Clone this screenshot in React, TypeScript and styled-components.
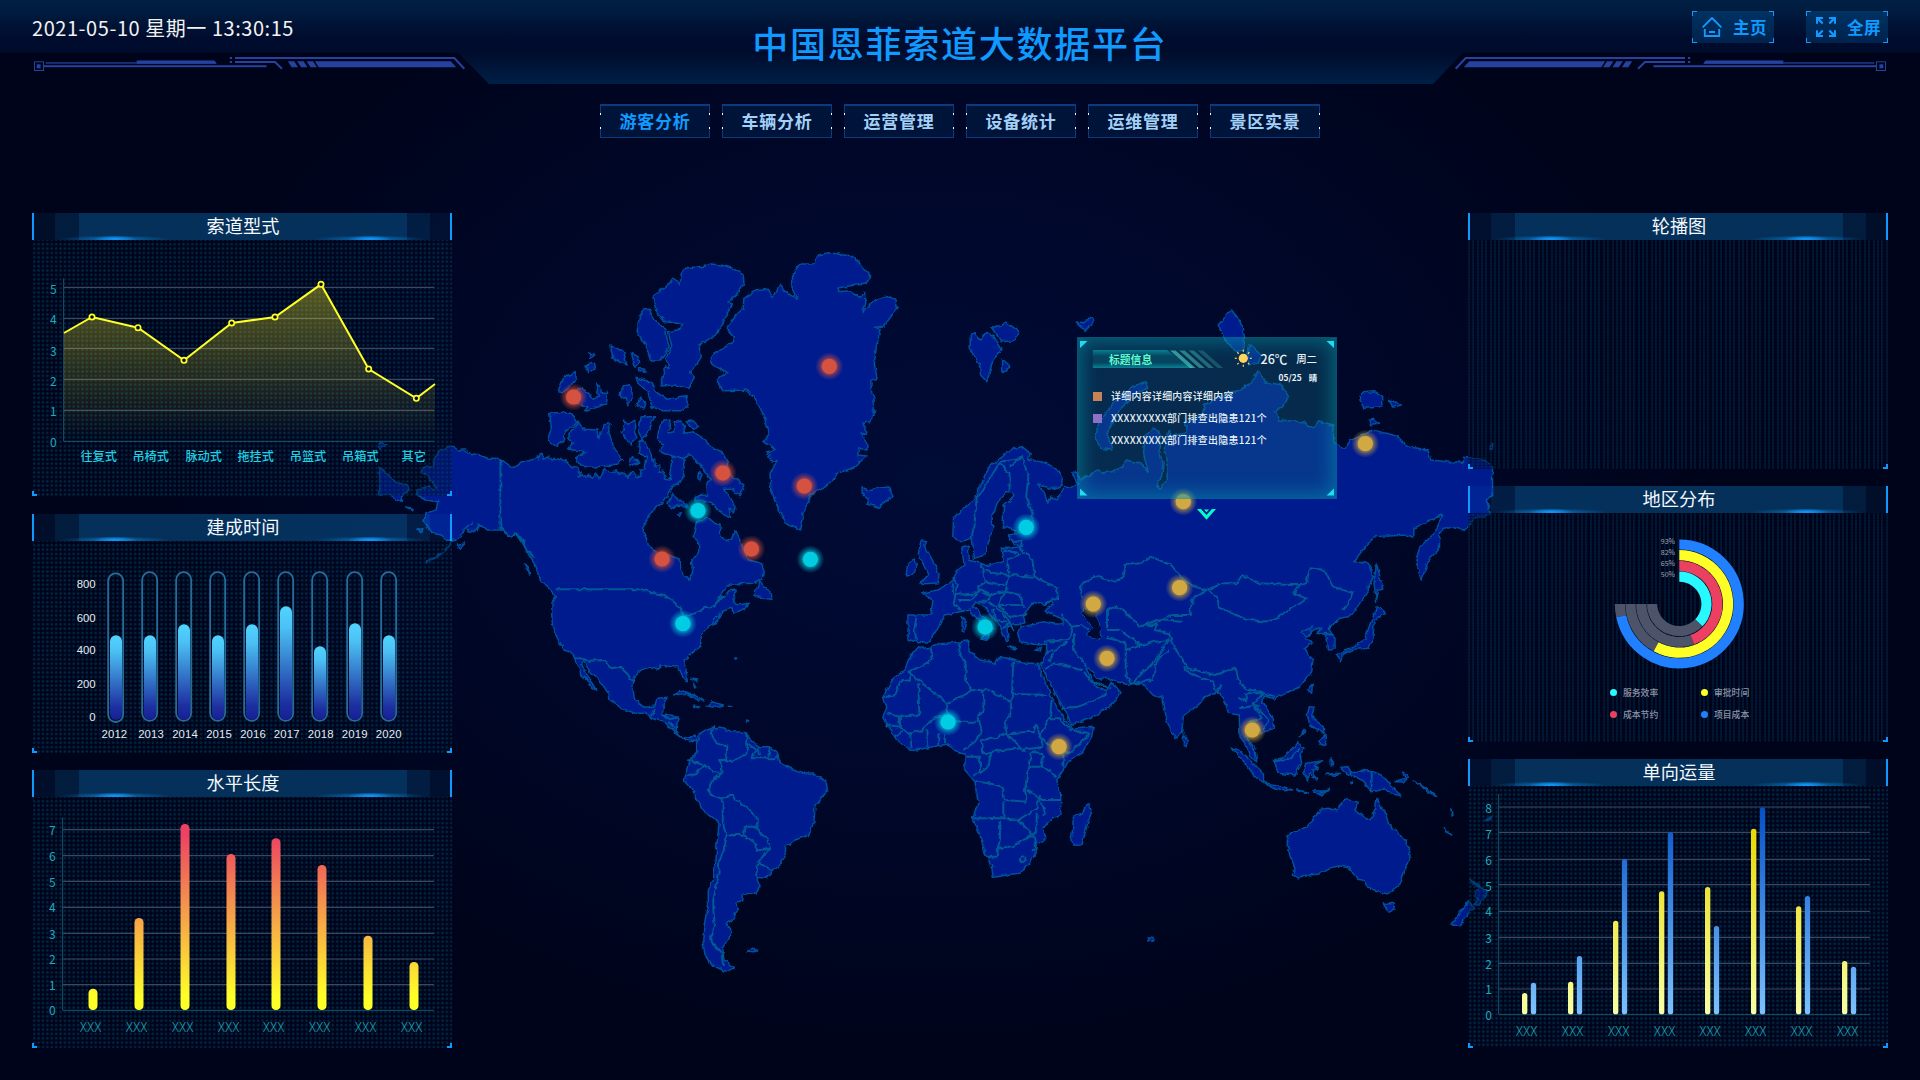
import React from "react";
import styled, { createGlobalStyle } from "styled-components";

const GlobalStyle = createGlobalStyle`
  * { box-sizing: border-box; }
  html, body { margin: 0; background: #00041b; }
  body { overflow: hidden; font-family: "Noto Sans CJK SC", "Noto Sans", sans-serif; }
`;

const BLUE = "#109aff";

const Page = styled.div`
  position: relative;
  width: 1920px;
  height: 1080px;
  overflow: hidden;
  background: radial-gradient(ellipse 760px 560px at 930px 480px, #000b36 0%, #00082e 40%, #000520 85%, #00041b 100%);
`;

/* ---------- header ---------- */

const Header = styled.header`
  position: relative;
  height: 84px;
  display: grid;
  grid-template-columns: 1fr auto 1fr;
  padding: 0 32px;
`;

const HeaderArt = styled.svg`
  position: absolute;
  left: 0;
  top: 0;
  width: 1920px;
  height: 84px;
`;

const Clock = styled.div`
  position: relative;
  height: 57px;
  line-height: 56px;
  font-size: 20px;
  letter-spacing: 0.55px;
  color: #f2f2f2;
  white-space: nowrap;
`;

const Title = styled.h1`
  position: relative;
  margin: 0;
  line-height: 84px;
  font-size: 36px;
  font-weight: 500;
  letter-spacing: 1.75px;
  color: ${BLUE};
`;

const Actions = styled.div`
  position: relative;
  display: flex;
  justify-content: flex-end;
  gap: 32px;
  padding-top: 11px;
`;

const corner = (x: string, y: string, len: number, t: number) =>
  `linear-gradient(${BLUE}, ${BLUE}) ${x} ${y} / ${len}px ${t}px no-repeat, linear-gradient(${BLUE}, ${BLUE}) ${x} ${y} / ${t}px ${len}px no-repeat`;

const ActionButton = styled.button`
  width: 82px;
  height: 32px;
  padding: 0 7px 0 10px;
  display: flex;
  align-items: center;
  justify-content: space-between;
  border: 0;
  font: 700 16.5px "Noto Sans CJK SC", sans-serif;
  letter-spacing: 0.5px;
  color: ${BLUE};
  background: ${corner("left", "top", 5, 1)}, ${corner("right", "top", 5, 1)},
    ${corner("left", "bottom", 5, 1)}, ${corner("right", "bottom", 5, 1)},
    linear-gradient(#003263, #00224d);
`;

const Ornament = () => (
  <g fill="#25429f" stroke="none">
    <rect x="34.5" y="61.8" width="9" height="8.7" fill="none" stroke="#25429f" strokeWidth="1" />
    <rect x="36.7" y="64.3" width="3.9" height="4" />
    <rect x="45.7" y="62.2" width="170" height="1.5" opacity=".85" />
    <path d="M136.7 60.6H214.5L216.8 63.7H136.7Z" />
    <rect x="43.7" y="65.2" width="222.8" height="2" />
    <rect x="229.8" y="57" width="2.2" height="2" />
    <rect x="229.8" y="61" width="2.2" height="2" />
    <path d="M235 58H454.3L464.3 68.7M235 62H275L282 68.7" fill="none" stroke="#25429f" strokeWidth="2" />
    {[0, 1, 2].map((i) => (
      <path key={i} d={`M${287.8 + i * 9.4} 61.3h6.4l3.9 6h-6.4z`} />
    ))}
    <path d="M314.8 61.3H450.8L456.2 67.3H318.8Z" />
  </g>
);

const HomeIcon = () => (
  <svg width="20" height="20" viewBox="0 0 20 20" fill="none" stroke={BLUE} strokeWidth="1.9">
    <path d="M0.6 10.4L10 1L19.4 10.4M2.8 12V19H17.2V12M7 15H13" />
  </svg>
);

const ExpandIcon = () => (
  <svg width="20" height="20" viewBox="0 0 20 20" fill={BLUE}>
    {["", "translate(20 0) scale(-1 1)", "translate(0 20) scale(1 -1)", "translate(20 20) scale(-1 -1)"].map((t) => (
      <path key={t} transform={t} d="M0 0H7V2H4L7.4 5.7L6 7.2L2 3.4V6.8H0Z" />
    ))}
  </svg>
);

/* ---------- navigation ---------- */

const Nav = styled.nav`
  position: relative;
  display: flex;
  justify-content: center;
  gap: 12px;
  padding-top: 20px;
`;

const NavItem = styled.a<{ $active?: boolean }>`
  width: 110px;
  height: 34px;
  line-height: 34px;
  text-align: center;
  font-size: 17px;
  font-weight: 700;
  letter-spacing: 0.7px;
  color: ${(p) => (p.$active ? BLUE : "#a3d0f7")};
  background:
    linear-gradient(#0b3b7d 0 9px, #fff 9px 11px, transparent 11px 23px, #fff 23px 25px, #0b3b7d 25px) left / 1px 100% no-repeat,
    linear-gradient(#0b3b7d 0 9px, #fff 9px 11px, transparent 11px 23px, #fff 23px 25px, #0b3b7d 25px) right / 1px 100% no-repeat,
    linear-gradient(#0b3b7d 0 1.5px, #00143a 1.5px 32.5px, #0b3b7d 32.5px);
`;

/* ---------- world map ---------- */

type Sheet = "A" | "B" | "C" | "D";
type Shape = string;

const SHEETS: Record<Sheet, [number, number, number, number]> = {
  A: [370, 240, 2.8, 3],
  B: [850, 300, 2.4123, 3],
  C: [540, 600, 3, 3],
  D: [1000, 590, 3, 3],
};

/* A shape is a run of "x,y" pairs; a sheet letter switches the survey sheet the pairs are measured on. */
const trace = (shape: Shape) => {
  let sheet: Sheet = "A";
  const out: string[] = [];
  for (const token of shape.trim().split(/\s+/)) {
    if (token in SHEETS) {
      sheet = token as Sheet;
    } else {
      const [ox, oy, sx, sy] = SHEETS[sheet];
      const [x, y] = token.split(",").map(Number);
      out.push(`${(ox + x / sx).toFixed(1)},${(oy + y / sy).toFixed(1)}`);
    }
  }
  return out.join(" ");
};

const LAND: Shape[] = [
  // North America
  `A 229,616 245,630 268,630 280,640 305,645 330,655 350,655 365,660 385,672 402,683 425,665 445,662 462,655 468,648 473,657 478,640 488,655 500,648 508,663 512,655 530,658 550,664 565,680 582,683 592,705 585,710 612,706 625,712 635,702 640,718 652,700 655,685 670,697 690,692 697,703 712,700 722,712 735,695 745,710 760,705 752,690 770,690 775,650 752,640 755,605 765,598 778,620 787,640 790,665 797,660 800,680 812,675 808,697 820,690 828,718 838,720 840,700 845,660 850,650 875,655 880,665 875,690 880,710 862,735 843,740 835,760 828,775 820,790 800,800 780,830 768,850 764,880 775,895 780,920 800,935 835,945 868,958 870,985 880,1005 893,1018 902,1000 905,985 900,965 920,935 920,905 905,890 912,870 917,845 945,830 965,850 980,855 982,885 998,905 1010,900 1024,872 1035,895 1045,925 1060,960 1095,970 1102,990 1098,1015 1070,1030 1010,1032 990,1050 975,1075 990,1070 1005,1052 1025,1050 1022,1065 1015,1085 1030,1095 1062,1090 1050,1105 1020,1118 1010,1105 985,1115 975,1145 950,1160
   C 537,40 537,62 510,75 490,95 480,120 484,138 465,152 432,180 437,205 442,245 432,240 422,215 415,200 395,200 360,195 358,208 330,200 300,212 283,235 278,265 285,300 312,322 345,318 352,295 382,292 370,320 366,345 395,346 415,350 410,375 408,395 425,412 445,415 465,405 470,425 460,420 452,425 435,420 415,405 395,385 375,368 350,360 330,352 315,340 285,340 245,325 210,300 208,285 185,250 150,215 132,185 125,190 135,212 150,240 170,272 155,262 140,235 122,225 118,205 105,175 100,165 75,150 55,120 38,85 35,40
   A 510,1090 522,1070 500,1045 475,1020 465,980 445,945 425,905 412,885 395,890 365,870 330,870 305,855 295,872 280,880 270,865 285,850 265,865 255,890 230,905 210,930 190,950 158,967 205,935 225,910 232,897 215,898 200,885 175,880 165,865 152,845 155,820 185,810 190,785 155,780 133,765 135,750 165,738 180,750 188,745 165,715 143,692 150,682 178,680 180,655 200,630`,
  // Greenland
  `A 1115,148 1125,175 1148,132 1165,155 1196,178 1182,145 1183,110 1195,85 1208,72 1243,72 1255,45 1285,38 1350,48 1375,75 1402,108 1388,132 1340,138 1310,145 1312,155 1345,152 1370,172 1388,158 1388,190 1380,215 1415,180 1445,167 1472,178 1477,205 1455,235 1440,258 1415,262 1428,268 1418,320 1412,370 1420,415 1402,425 1405,460 1412,480 1405,510 1415,517 1400,545 1380,550 1390,583 1372,575 1390,605 1392,630 1370,625 1365,645 1392,648 1350,685 1308,700 1295,725 1275,740 1245,755 1232,765 1225,790 1212,820 1212,840 1205,870 1180,855 1165,852 1140,800 1122,745 1120,700 1140,665 1120,660 1113,635 1135,628 1103,605 1118,580 1105,535 1095,510 1080,478 1052,450 990,452 970,420 1000,400 970,380 952,365 960,345 1018,305 1020,290 998,265 1030,220 1045,205 1047,175 1080,152`,
  // Canadian Arctic
  `A 868,135 872,100 890,82 925,82 955,72 985,76 1015,85 1045,105 1047,130 1025,165 1000,188 1015,192 1000,220 980,265 970,285 940,305 920,315 928,350 910,380 895,395 908,412 890,445 855,435 812,438 825,400 822,380 838,385 828,355 845,320 835,275 870,268 875,252 825,245 800,210 793,170 815,148 835,135 848,115 860,122`,
  `A 765,210 782,208 795,240 828,268 832,300 838,320 815,360 785,360 772,318 748,275 755,230`,
  `A 745,412 790,430 800,455 830,478 885,470 890,500 870,512 820,512 790,500 778,455 750,430`,
  `A 672,315 710,335 720,378 680,355`,
  `A 732,338 750,350 755,370 742,382`,
  `A 712,435 732,438 735,475 722,497 715,475 698,465 700,450`,
  `A 755,472 772,490 768,507 748,497`,
  `A 575,395 578,420 560,440 540,458 525,455 545,410`,
  `A 632,430 645,440 648,460 665,460 662,490 630,505 600,515 610,500 575,490 560,460 590,445 612,460 625,478 640,468`,
  `A 615,340 632,345 615,355`,
  `A 605,375 630,370 630,385 612,398`,
  `A 752,385 770,388 770,394 752,392`,
  `A 503,520 540,517 570,528 582,548 550,572 540,600 525,622 497,600 508,565`,
  `A 585,550 600,568 635,570 640,595 655,555 670,545 675,552 668,570 675,600 690,635 710,660 680,675 620,682 590,678 575,655 605,635 555,628 570,610 553,598 565,570`,
  `A 710,540 725,550 742,538 740,575 748,595 730,612 700,575 712,570`,
  `A 760,530 797,530 780,570 762,598 752,575 756,550`,
  `A 735,650 752,668 728,678 724,665`,
  `A 808,570 815,545 840,540 835,580 850,575 855,545 870,540 885,565 880,580 905,575 940,600 950,620 985,635 1000,665 1005,700 1030,720 1047,735 1035,768 1010,745 990,745 1010,775 1022,800 1018,818 1005,805 1010,832 980,815 955,790 910,780 910,768 945,765 943,730 955,720 935,690 910,655 895,645 870,658 812,632 820,615 805,600`,
  `A 885,545 905,542 920,560 905,568`,
  `A 845,760 890,800 860,795 840,808 835,790`,
  `A 920,695 932,705 925,722 918,715`,
  `A 1090,1018 1098,1035 1118,1050 1125,1078 1100,1075 1075,1068 1085,1040`,
  `A 858,822 872,818 865,830`,
  `A 97,800 110,803 120,812`,
  `A 432,975 440,980 447,1002`,
  `A 245,915 265,912 250,928`,
  `A 134,868 148,866 144,876`,
  // Eastern tip of Chukotka wrapping round the left edge
  `A 27,682 50,705 75,728 105,735 110,752 90,765 85,787 55,765 27,765`,
  `A 25,605 47,615 28,628`,
  // Iceland
  `A 1378,740 1395,755 1420,745 1455,740 1462,770 1425,802 1390,792 1395,775 1378,760`,
  // Caribbean and Atlantic islands
  `C 403,285 415,275 432,273 460,285 495,300 475,300 440,280`,
  `C 498,318 515,305 550,315 528,322`,
  `C 460,319 480,321 478,323`,
  `C 565,319 577,320 575,322`,
  `C 455,235 472,236 470,243`,
  `C 461,252 467,262 464,264`,
  `C 584,174 590,174 587,178`,
  `C 620,360 626,362 622,366`,
  `C 620,1056 635,1048 650,1050 640,1058`,
  // South America
  `C 470,425 480,400 500,388 520,380 528,388 540,383 575,395 600,396 618,398 635,425 660,440 690,440 712,460 722,490 740,500 770,512 800,522 820,522 858,545 863,570 845,595 825,620 822,665 812,690 800,708 765,720 737,740 735,770 715,797 700,810 680,835 648,832 660,860 648,880 610,882 608,905 585,910 595,925 578,958 562,972 576,995 560,1025 548,1045 552,1080 580,1102 578,1108 555,1113 520,1098 495,1065 488,1020 492,980 498,945 505,925 505,870 520,840 528,780 530,740 538,665 515,650 490,633 470,595 455,565 433,540 445,490 470,455`,
  // Africa
  `C 1135,140 1150,145 1170,142 1195,132 1285,123 1288,155 1320,180 1345,185 1365,193 1375,175 1390,172 1450,190 1492,190 1505,225
   D 130,258 150,310 175,360 205,400 215,418 280,412 275,440 245,490 205,515 190,540 170,570 182,615 182,670 150,690 130,715 137,745 112,765 108,790 90,815 60,850 30,853 5,858
   C 1360,832 1355,800 1335,760 1320,705 1298,655 1315,605 1308,570 1305,545 1275,510 1275,460 1240,450 1225,432 1180,440 1115,452 1070,420 1045,380 1028,355 1040,320 1030,290 1060,235 1095,210 1105,180`,
  `D 265,638 273,660 260,710 245,765 225,766 213,755 218,715 220,680 245,670`,
  // Eurasia
  `B 390,448 415,440 435,460 430,478 475,490 500,510 512,535 510,555 490,567 455,555 470,580 475,610 485,592 500,600 508,575 520,560 530,565 548,550 535,515 550,520 555,540 600,510 610,518 630,515 660,500 665,480 700,490 720,515 708,460 712,410 735,385 750,400 745,450 755,490 752,530 740,560 750,565 765,535 765,500 758,440 770,390 775,408 810,400 810,365 850,345 855,315 890,290 940,270 965,250 985,212 1000,245 1040,255 1058,290 1045,320 1025,335 1035,360 1090,365 1120,385 1130,362 1165,375 1170,430 1190,445 1210,420 1240,405 1260,390 1320,408 1345,440 1395,450 1400,480 1440,485 1480,487 1480,472 1530,480 1550,500 1550,590 1535,600 1545,640 1510,655 1480,690 1445,680 1422,695 1422,745 1400,770 1378,840 1365,780 1375,740 1410,700 1430,645 1400,660 1360,685 1360,712 1340,705 1300,708 1265,710 1240,745 1215,785 1250,790 1262,830 1250,860
   D 1105,5 1075,50 1045,80 1020,85 985,115 1005,145 1005,178 985,180 982,145 970,132 950,130 965,112 940,120 920,140 900,130 938,108 925,135 915,148 940,155 915,175 938,215 935,245 900,290 830,320 828,328 790,318 785,335 820,385 820,412 785,435 775,415 755,440 735,440 765,480 770,515 750,500 735,460 720,440 718,375 685,370 678,345 660,310 650,308 615,320 600,340 550,380 545,425 527,445 510,415 495,380 485,320 465,322 445,300 425,280 380,283 340,272 320,262 305,270 290,262 270,235 258,235 285,285 300,295 318,305 332,275 360,308 340,340 290,375 213,405 205,380 155,290 135,250 118,220 132,215 140,180 140,162 110,165 80,158 60,155 53,130 60,112 80,108 130,95 160,102 188,102 190,88 160,75 135,60 158,42 155,35 130,45 100,37 70,75 75,98 50,105 40,100 32,108 20,110 25,152
   B 378,1025 360,975 340,945 320,915 300,905 297,920 330,960 345,985 330,1018 315,1015 328,1005 315,970 290,930 265,935 230,945 205,1000 190,1025 165,1028 140,1018 140,945 195,945 200,900 175,880 210,870 245,845 260,810 275,795 270,745 285,738 288,780 315,790 330,797 370,785 365,745 385,745 410,740 385,720 385,705 430,695 400,692 370,680 370,620 395,590 393,575 375,575 355,610 340,660 345,680 325,765 300,775 295,715 265,725 248,710 250,650 300,600 325,530 330,510 360,475`,
  `B 172,720 185,722 180,740 190,760 215,820 213,848 170,852 188,825 180,800 165,760`,
  `B 155,777 160,790 155,820 135,828 140,790`,
  `B 270,950 278,958 277,998 271,995`,
  `B 383,1042 402,1046 398,1050`,
  `B 448,1050 462,1042 458,1052`,
  // Svalbard, Franz Josef, Novaya Zemlya, Severnaya Zemlya
  `B 290,105 300,98 315,120 328,97 345,110 365,150 345,180 330,245 315,225 312,190 290,150`,
  `B 340,80 358,82 375,65 408,95 395,122 365,125`,
  `B 368,178 388,200 368,215`,
  `B 545,65 565,68 580,50 590,60 568,92 560,82`,
  `B 920,30 940,60 952,110 950,150 930,155 900,110 888,75`,
  `B 965,135 992,165 985,190 962,195 960,160`,
  `B 715,243 718,265 690,280 650,330 620,400 632,450 605,445 592,415 600,370 635,310 680,260`,
  `B 1235,278 1265,275 1285,292 1285,320 1240,325 1230,300`,
  `B 1300,298 1330,315 1310,322`,
  `B 1252,360 1265,358 1278,368 1255,374`,
  `B 1550,430 1550,446 1541,444`,
  // Sakhalin and Japan
  `B 1270,790 1278,830 1285,865 1272,868 1270,905 1264,850`,
  `B 1270,918 1292,940 1270,957 1264,965 1262,1010 1252,1045 1215,1048 1190,1062 1183,1085 1175,1065 1215,1040 1242,1018 1258,960 1266,940`,
  // South-east Asia and Oceania
  `D 693,472 715,480 760,520 790,550 792,578 765,560 740,525 715,495`,
  `D 785,577 830,585 878,600 830,598`,
  `D 820,510 845,505 880,475 893,458 912,475 900,495 905,520 885,555 835,550`,
  `D 918,520 968,512 945,525 955,538 935,540 950,570 930,550 922,572 911,545`,
  `D 1022,532 1045,530 1052,550 1080,540 1120,545 1150,558 1175,590 1205,618 1175,612 1155,598 1115,605 1085,570 1040,550`,
  `D 928,350 942,352 935,380 970,410 972,430 930,405 922,375`,
  `D 955,450 975,435 978,468 962,462`,
  `D 912,418 918,422 898,440`,
  `D 937,283 935,310 922,297`,
  `D 993,503 1000,515 994,528`,
  `D 890,600 925,606 920,612`,
  `D 935,602 975,603 955,612`,
  `D 988,598 965,615 953,613`,
  `D 977,553 1018,550 1010,556`,
  `D 550,432 565,450 558,467 550,460`,
  `D 1208,546 1227,560 1212,576 1185,575 1215,565`,
  `D 1240,573 1290,602 1312,622 1285,605`,
  `D 1352,660 1360,675 1358,678`,
  `D 1330,713 1355,735 1350,732`,
  `D 1478,675 1468,690 1455,692`,
  `D 1052,577 1058,577 1055,584`,
  `D 862,735 890,722 920,712 945,680 965,658 985,655 1010,663 1035,628 1075,637 1065,662 1110,692 1120,680 1128,625 1140,650 1155,665 1165,700 1200,735 1228,770 1230,805 1215,840 1200,885 1165,912 1110,900 1088,870 1070,868 1050,835 1020,828 985,835 955,853 920,855 895,867 877,855 885,835 870,795 862,770`,
  `D 1150,938 1165,942 1183,940 1182,955 1168,970`,
  `D 1410,865 1435,888 1462,905 1438,945 1425,945 1435,925 1425,915 1435,895`,
  `D 1408,935 1420,950 1395,985 1380,1010 1353,1003 1375,975`,
  `D 445,1043 460,1046 458,1054 447,1053`,
];

const BORDERS: Shape[] = [
  `A 365,660 365,865 395,890 412,880 430,905 445,935 460,955`,
  `A 520,1048 760,1048 790,1058 825,1065 850,1085 870,1105 875,1130 910,1120 935,1105 965,1100 975,1080 990,1070`,
  `C 105,172 150,182 195,180 215,205 240,200 260,220 275,240 285,243`,
  `C 345,325 335,350`, `C 370,345 390,358 412,352`, `C 385,365 405,385`,
  `C 520,380 512,400 530,430 562,440 558,480 580,485 620,460 622,430 618,398`,
  `C 558,480 540,480 545,520 515,545 503,570 515,585 545,595 578,585 585,600 625,625 650,650 650,680 618,680 605,705 575,705 560,710 548,665 548,595`,
  `C 608,705 650,735 650,752 690,745 680,715 660,700 650,680`,
  `C 690,745 655,785 648,830`, `C 655,785 697,812`,
  `C 560,710 550,755 538,780 535,830 520,900 520,930 525,980 510,1020 545,1060 550,1100`,
  `C 445,480 490,495 520,515 545,520`, `C 490,495 470,522 440,530`,
  `C 622,430 650,450 632,475 700,475 715,470`, `C 655,440 660,465`, `C 690,440 685,470`,
  `C 1172,145 1178,178 1140,200 1105,215 1220,310 1300,270 1275,240 1278,195 1258,160 1262,125`,
  `C 1300,270 1330,275 1340,268 1415,305 1420,185`, `C 1420,282 1520,285`,
  `C 1415,305 1408,345 1395,370 1400,400`, `C 1330,275 1330,330 1315,350 1325,395`,
  `C 1220,310 1225,345 1180,355 1145,390 1110,400`, `C 1135,250 1138,345 1080,350 1040,340`,
  `C 1030,290 1065,290 1080,245 1110,240 1110,215`, `C 1225,345 1240,365 1315,365`,
  `C 1215,400 1215,430`, `C 1195,400 1195,435`, `C 1162,390 1165,440`, `C 1110,400 1115,445`,
  `C 1080,350 1080,385 1110,400`, `C 1040,375 1080,380`, `C 1065,410 1090,395`,
  `C 1325,395 1305,425 1270,450`, `C 1325,420 1330,460 1355,455 1385,450 1445,445 1400,400 1365,415 1325,420`,
  `C 1400,400 1480,395 1490,375 1510,440 1445,450`, `C 1355,455 1345,500 1320,520 1300,525`,
  `C 1280,470 1320,470 1320,520`, `C 1305,545 1350,550 1385,560 1395,600 1460,605 1455,570 1465,500 1475,455`,
  `C 1465,500 1510,500 1550,530`, `C 1460,570 1510,600 1560,600`, `C 1390,605 1390,655 1300,655`,
  `C 1390,655 1435,660 1490,625 1500,585`, `C 1380,665 1380,715 1370,770 1340,770`,
  `C 1375,745 1420,738 1480,705 1435,660`, `C 1480,705 1490,745 1478,752`, `C 1490,640 1490,690 1480,705`,
  `C 1500,590 1515,640 1505,645`, `C 1438,778 1450,770 1458,780 1445,790 1438,778`, `C 1475,455 1510,460 1505,500`,
  `D 155,330 150,380 118,440 155,470 205,490 230,470 270,430 210,420 180,385 150,385`, `D 190,490 190,530`,
  `B 410,475 380,480 360,490 340,530 305,600 300,680 290,715`, `B 360,490 385,520 385,575`,
  `B 385,500 415,470 430,530 425,590 440,640 440,680`,
  `B 560,890 555,860 590,828 640,845 660,830 665,795 700,790 725,770 775,795 800,835 830,860 860,870 900,850 935,850 945,825 990,850 1060,855 1085,855 1070,880 1100,895 1060,930 1015,965 960,960 930,945 890,920 885,890 860,870`,
  `B 1085,855 1100,850 1110,805 1145,810 1165,860 1215,880 1190,930`,
  `B 860,870 825,900 820,945 775,945 740,970 700,980 660,930 640,920 620,930 620,985`,
  `B 740,970 735,990 770,1000 775,1025 790,1060 815,1105 880,1125 930,1105 940,1150 955,1165 1000,1180 1025,1190`,
  `B 620,1010 665,1030 665,1130 680,1150 730,1090 770,1020`, `B 665,1050 735,1025 770,1020`, `B 620,990 650,990 700,1035`,
  `B 470,1025 530,1020 535,980 510,945`, `B 535,980 560,975 575,990`, `B 540,1000 540,1050 570,1100`,
  `B 480,1085 500,1045 525,1025`, `B 470,1105 490,1090 560,1110`, `B 470,1060 490,1050`,
  `B 510,1225 550,1220 585,1205 620,1180`, `B 565,1115 580,1145 630,1165`,
  `B 680,1150 730,1140 740,1080 770,1050`, `B 805,1100 820,1120 875,1145 885,1180 895,1150`, `B 700,980 740,960 800,965`,
  `D 715,320 740,335 735,310 790,310 760,340 805,390 790,420`, `D 718,355 780,345`, `D 765,350 785,385 745,395`,
  `D 1115,545 1115,605`, `D 820,515 870,505 900,475`, `D 985,120 1010,90`, `D 970,130 1000,135`,
  `B 385,720 415,725 410,745 440,780 445,830 385,825 380,780 415,760`, `B 370,750 405,758`,
  `B 445,830 500,865 500,895 470,910`, `B 385,825 375,875 410,885 420,920`,
  `B 385,825 350,820 320,810 315,790`, `B 320,815 328,845 310,860 310,880 250,885 245,850`,
  `B 245,835 260,850 255,885 250,910 265,930`, `B 310,880 290,900 260,900`,
  `B 328,845 375,855`, `B 310,870 340,885 375,875 358,915 385,950 425,945`, `B 340,885 330,905 310,905`,
  `B 335,905 370,940 385,965`, `B 345,930 350,960 380,965`, `B 358,915 420,915`,
  `B 160,950 155,990 160,1020`, `B 362,985 385,970 395,990`,
];

const CASPIAN = `D 248,55 275,62 290,70 292,92 298,100 302,115 306,145 290,153 262,135 275,115 262,95 245,70`;

const HUES = {
  red: "rgba(218,82,62,.92)",
  cyan: "rgba(0,208,228,.95)",
  gold: "rgba(212,170,64,.94)",
};

const MARKERS: [keyof typeof HUES, Shape][] = [
  ["red", "A 570,471"], ["red", "A 988,699"], ["red", "A 818,957"], ["red", "A 1068,927"],
  ["red", "A 1216,738"], ["red", "A 1286,379"],
  ["cyan", "A 918,812"], ["cyan", "A 1233,958"], ["cyan", "A 876,1151"],
  ["cyan", "B 425,682"], ["cyan", "B 326,981"], ["cyan", "C 1224,366"],
  ["gold", "B 804,605"], ["gold", "B 1243,431"], ["gold", "B 795,863"], ["gold", "B 587,912"],
  ["gold", "B 620,1075"], ["gold", "D 177,470"], ["gold", "D 757,420"],
];

const MapLayer = styled.svg`
  position: absolute;
  inset: 0;
`;

const WorldMap = () => (
  <MapLayer width="1920" height="1080" viewBox="0 0 1920 1080">
    <defs>
      <filter id="coast" filterUnits="userSpaceOnUse" x="370" y="230" width="1140" height="760" colorInterpolationFilters="sRGB">
        <feTurbulence type="fractalNoise" baseFrequency="0.16" numOctaves="2" seed="4" result="noise" />
        <feDisplacementMap in="SourceGraphic" in2="noise" scale="4.5" xChannelSelector="R" yChannelSelector="G" />
      </filter>
      {Object.entries(HUES).map(([name, hue]) => (
        <radialGradient id={`glow-${name}`} key={name}>
          <stop offset="0.5" stopColor={hue} stopOpacity=".75" />
          <stop offset="0.72" stopColor={hue} stopOpacity=".36" />
          <stop offset="1" stopColor={hue} stopOpacity="0" />
        </radialGradient>
      ))}
    </defs>
    <g filter="url(#coast)">
      <g fill="#001b8e" stroke="#00509c" strokeWidth="1.5" strokeLinejoin="round">
        {LAND.map((s) => (
          <polygon key={s} points={trace(s)} />
        ))}
      </g>
      <g fill="none" stroke="#005a94" strokeWidth="1.9" strokeLinejoin="round">
        {BORDERS.map((s) => (
          <polyline key={s} points={trace(s)} />
        ))}
      </g>
      <polygon points={trace(CASPIAN)} fill="#000a34" stroke="#00509f" strokeWidth="1" />
    </g>
    {MARKERS.map(([hue, at]) => {
      const [x, y] = trace(at).split(",");
      return (
        <g key={at}>
          <circle cx={x} cy={y} r="14" fill={`url(#glow-${hue})`} />
          <circle cx={x} cy={y} r="7.6" fill={HUES[hue]} />
        </g>
      );
    })}
  </MapLayer>
);

/* ---------- map tooltip ---------- */

const Tooltip = styled.section`
  position: absolute;
  left: 1077px;
  top: 337px;
  width: 260px;
  height: 162px;
  padding: 12px 19px 0 15px;
  color: #e6f2f7;
  border: 1px solid rgba(0, 160, 180, 0.35);
  background: rgba(18, 110, 140, 0.34);
  box-shadow: inset 0 0 20px 3px rgba(0, 190, 200, 0.42);
`;

const TooltipArt = styled.svg`
  position: absolute;
  left: -1px;
  top: -1px;
`;

const TooltipTop = styled.div`
  position: relative;
  display: flex;
  justify-content: space-between;
  height: 18px;
  line-height: 17px;
`;

const TagTitle = styled.h3`
  margin: 0 0 0 16px;
  font-size: 10.8px;
  line-height: 18px;
  font-weight: 700;
  color: #5dfbd0;
`;

const Weather = styled.div`
  display: flex;
  gap: 9px;
  font-size: 10.4px;
  font-weight: 500;
  b { font-size: 12.6px; font-weight: 500; letter-spacing: -0.1px; }
`;

const DateLine = styled.div`
  position: relative;
  display: flex;
  justify-content: flex-end;
  gap: 7px;
  margin-top: 1px;
  line-height: 17px;
  font-size: 8.4px;
  font-weight: 700;
`;

const Details = styled.ul`
  position: relative;
  list-style: none;
  margin: -1px 0 0;
  padding: 0;
`;

const Detail = styled.li<{ $bullet: string }>`
  display: flex;
  align-items: center;
  gap: 9px;
  height: 22px;
  font-size: 9.9px;
  letter-spacing: 0.35px;
  font-weight: 500;
  white-space: nowrap;
  &::before {
    content: "";
    width: 9px;
    height: 9px;
    background: ${(p) => p.$bullet};
  }
`;

const Pointer = styled.svg`
  position: absolute;
  left: 1197px;
  top: 509px;
`;

const MapTooltip = () => (
  <>
    <Tooltip>
      <TooltipArt width="260" height="162" viewBox="0 0 260 162">
        <defs>
          <linearGradient id="tag" x1="0" x2="0" y1="0" y2="1">
            <stop offset="0" stopColor="#067f93" />
            <stop offset=".35" stopColor="#06455f" />
            <stop offset=".7" stopColor="#06455f" />
            <stop offset="1" stopColor="#0a8296" />
          </linearGradient>
        </defs>
        <path d="M3 4h7.5L3 11zM257 4h-7.5L257 11zM3 158.500h7.500L3 151.500zM257 158.500h-7.500L257 151.500z" fill="#1fdcf5" />
        <path d="M15.8 13H90L116 31H15.800Z" fill="url(#tag)" />
        {[0.65, 0.5, 0.38, 0.25].map((o, i) => (
          <path key={o} d={`M${93 + i * 9.2} 13.500h5.500l20 17.500h-5.500z`} fill="#4fd0c0" opacity={o} />
        ))}
        <circle cx="166.300" cy="21.300" r="4.600" fill="#ffd45f" />
        {Array.from({ length: 8 }, (_, i) => (
          <path key={i} d="M166.300 12.800v2" stroke="#ffd45f" strokeWidth="1.200" transform={`rotate(${i * 45} 166.3 21.3)`} />
        ))}
      </TooltipArt>
      <TooltipTop>
        <TagTitle>标题信息</TagTitle>
        <Weather>
          <b>26℃</b>
          <span>周二</span>
        </Weather>
      </TooltipTop>
      <DateLine>
        <span>05/25</span>
        <span>晴</span>
      </DateLine>
      <Details>
        <Detail $bullet="#c98253">详细内容详细内容详细内容</Detail>
        <Detail $bullet="#8f70c4">XXXXXXXXX部门排查出隐患121个</Detail>
        <Detail $bullet="transparent">XXXXXXXXX部门排查出隐患121个</Detail>
      </Details>
    </Tooltip>
    <Pointer width="19" height="11" viewBox="0 0 19 11" fill="#00ffc8">
      <path d="M0 0H4L9.500 6L15 0H19L9.500 10.800Z" />
      <path d="M7 .5h5L9.500 3.300z" />
    </Pointer>
  </>
);

/* ---------- panels ---------- */

const Main = styled.main`
  position: relative;
  display: flex;
  justify-content: space-between;
  padding: 75px 32px 0;
`;

const Column = styled.div`
  display: flex;
  flex-direction: column;
  justify-content: space-between;
  width: 420px;
  height: 835px;
`;

const PanelBox = styled.section<{ $h: number }>`
  height: ${(p) => p.$h}px;
  display: flex;
  flex-direction: column;
`;

const band = (a: number) => `rgba(14,155,240,${a})`;

const PanelTitle = styled.h2`
  margin: 0;
  height: 27px;
  line-height: 25px;
  text-align: center;
  text-indent: 2px;
  font-size: 18.2px;
  font-weight: 400;
  color: #f4f8ff;
  border: solid ${BLUE};
  border-width: 0 2px;
  background:
    radial-gradient(ellipse 22px 3.5px at 81px 26px, #109aff, rgba(16, 154, 255, 0)),
    radial-gradient(ellipse 56px 3.5px at 81px 26px, rgba(16, 154, 255, 0.6), rgba(16, 154, 255, 0)),
    radial-gradient(ellipse 22px 3.5px at 336px 26px, #109aff, rgba(16, 154, 255, 0)),
    radial-gradient(ellipse 56px 3.5px at 336px 26px, rgba(16, 154, 255, 0.6), rgba(16, 154, 255, 0)),
    linear-gradient(90deg, ${band(0.07)} 21px, ${band(0.16)} 21px 45px, ${band(0.29)} 45px 373px, ${band(0.16)} 373px 396px, ${band(0.07)} 396px);
`;

const PanelBody = styled.div<{ $lines?: boolean }>`
  flex: 1;
  min-height: 0;
  background:
    ${corner("left", "bottom", 5, 2)},
    ${corner("right", "bottom", 5, 2)},
    ${(p) =>
      p.$lines
        ? `repeating-linear-gradient(0deg, rgba(0,4,28,.35) 0 1px, transparent 1px 3px),
           repeating-linear-gradient(90deg, rgba(0,62,100,.34) 0 2px, transparent 2px 4.35px)`
        : `radial-gradient(circle, rgba(0,80,118,.5) .6px, rgba(0,80,118,.08) 1.6px, transparent 1.9px) 0 2px / 4.4px 4.4px`},
    rgba(0, 6, 28, 0.3);
`;

const Chart = styled.svg`
  display: block;
  width: 420px;
  text { font-family: "Noto Sans CJK SC", sans-serif; }
`;

type PanelProps = { title: string; height: number; lines?: boolean; children?: React.ReactNode };

const Panel = ({ title, height, lines, children }: PanelProps) => (
  <PanelBox $h={height}>
    <PanelTitle>{title}</PanelTitle>
    <PanelBody $lines={lines}>{children}</PanelBody>
  </PanelBox>
);

type AxesProps = { x: number; top: number; bottom: number; right: number; grid: number[]; labelX: number; labels: number[] };

/* `labels` holds the baselines of 0, 1, 2 ... from the bottom up */
const Axes = ({ x, top, bottom, right, grid, labelX, labels }: AxesProps) => (
  <>
    {grid.map((y) => (
      <path key={y} d={`M${x} ${y}H${right}`} stroke="#3b4760" strokeWidth="3.500" />
    ))}
    <path d={`M${x} ${top}V${bottom}H${right}`} fill="none" stroke="#14566a" strokeWidth="3" />
    <g fill="#1fa9ba" fontSize="38" fontWeight="400" textAnchor="middle">
      {labels.map((y, n) => (
        <text key={n} x={labelX} y={y} textLength="20" lengthAdjust="spacingAndGlyphs">{n}</text>
      ))}
    </g>
  </>
);

const LINE = [[132, 399], [216, 351], [354, 383], [492, 481], [635, 369], [765, 351], [903, 253], [1046, 507], [1189, 595], [1245, 552]];
const KINDS: [string, number][] = [["往复式", 236], ["吊椅式", 392], ["脉动式", 551], ["拖挂式", 707], ["吊篮式", 864], ["吊箱式", 1021], ["其它", 1181]];

const TypeChart = () => {
  const pts = LINE.map((p) => p.join(",")).join(" ");
  return (
    <Chart height="256" viewBox="36 120 1260 768">
      <defs>
        <linearGradient id="area" gradientUnits="userSpaceOnUse" x1="0" x2="0" y1="253" y2="724">
          <stop offset="0" stopColor="#fcee21" stopOpacity=".36" />
          <stop offset="1" stopColor="#fcee21" stopOpacity="0" />
        </linearGradient>
      </defs>
      <Axes x={131} top={235} bottom={724} right={1243} grid={[262, 355, 445, 538, 631]} labelX={100} labels={[741, 648, 558, 467, 373, 282]} />
      <polygon points={`132,724 ${pts} 1245,724`} fill="url(#area)" />
      <polyline points={pts} fill="none" stroke="#ffff28" strokeWidth="6" />
      {LINE.slice(1, -1).map(([x, y]) => (
        <circle key={x} cx={x} cy={y} r="8" fill="#0b1020" stroke="#ffff28" strokeWidth="5" />
      ))}
      <g fill="#20cfe2" fontSize="36.500" fontWeight="500" textAnchor="middle">
        {KINDS.map(([name, x]) => (
          <text key={name} x={x} y="784">{name}</text>
        ))}
      </g>
    </Chart>
  );
};

const BUILT = [
  [2012, 262, 405, 283], [2013, 364, 405, 393], [2014, 466, 372, 495], [2015, 568, 405, 597], [2016, 670, 372, 699],
  [2017, 772, 318, 800], [2018, 874, 438, 902], [2019, 979, 369, 1004], [2020, 1081, 405, 1106],
];
const BUILT_SCALE: [string, number][] = [["800", 262], ["600", 364], ["400", 462], ["200", 562], ["0", 661]];

const LatinText = styled.g`
  && text { font-family: "Liberation Sans", Arial, sans-serif; }
`;

const BuiltChart = () => (
  <Chart height="212" viewBox="36 122 1260 636">
    <defs>
      <linearGradient id="tube" x1="0" x2="0" y1="0" y2="1">
        <stop offset="0" stopColor="#50d3ff" />
        <stop offset=".18" stopColor="#4cc2f4" />
        <stop offset=".85" stopColor="#1d2fa0" />
        <stop offset="1" stopColor="#161f94" />
      </linearGradient>
    </defs>
    {BUILT.map(([year, x, top], i) => (
      <g key={year}>
        <rect x={x + 2.5} y={i ? 215.5 : 219} width="45" height="446" rx="22.500" fill="none" stroke="#276b98" strokeWidth="5.500" />
        <rect x={x + 8} y={top} width="36" height={659 - top} rx="18" fill="url(#tube)" />
      </g>
    ))}
    <LatinText fill="#e6ebef" fontSize="34">
      {BUILT_SCALE.map(([v, y]) => (
        <text key={v} x="227" y={y} textAnchor="end">{v}</text>
      ))}
      {BUILT.map(([year, , , cx]) => (
        <text key={year} x={cx} y="714" textAnchor="middle" textLength="77">{year}</text>
      ))}
    </LatinText>
  </Chart>
);

const PlaceholderLabels = ({ xs, y }: { xs: number[]; y: number }) => (
  <g fill="#1fa3b4" fontSize="38" fontWeight="300" textAnchor="middle">
    {xs.map((x) => (
      <text key={x} x={x} y={y} textLength="65" lengthAdjust="spacingAndGlyphs">XXX</text>
    ))}
  </g>
);

const LENGTHS = [[219, 686], [357, 474], [495, 192], [633, 282], [768, 235], [906, 315], [1044, 527], [1182, 606]];

const LengthChart = () => (
  <Chart height="251" viewBox="36 111 1260 753">
    <defs>
      <linearGradient id="heat" gradientUnits="userSpaceOnUse" x1="0" x2="0" y1="192" y2="750">
        <stop offset="0.05" stopColor="#ec4162" />
        <stop offset="0.5" stopColor="#f6a248" />
        <stop offset="0.93" stopColor="#ffff28" />
      </linearGradient>
    </defs>
    <Axes x={128} top={172} bottom={751} right={1242} grid={[209, 287, 364, 442, 520, 597, 674]} labelX={97} labels={[766, 690, 613, 537, 456, 380, 304, 225]} />
    {LENGTHS.map(([x, top]) => (
      <rect key={x} x={x - 13.5} y={top} width="27" height={750 - top} rx="13" fill="url(#heat)" />
    ))}
    <PlaceholderLabels xs={[212, 350, 488, 626, 761, 899, 1037, 1175]} y={815} />
  </Chart>
);

const FLOWS = [[224, 729, 698], [362, 695, 618], [497, 512, 327], [635, 424, 247], [773, 411, 528], [911, 236, 172], [1046, 469, 438], [1184, 633, 650]];

const FlowChart = () => (
  <Chart height="262" viewBox="54 108 1260 786">
    <defs>
      <linearGradient id="lemon" gradientUnits="userSpaceOnUse" x1="0" x2="0" y1="236" y2="793">
        <stop offset="0" stopColor="#ead800" />
        <stop offset="1" stopColor="#f8ffa6" />
      </linearGradient>
      <linearGradient id="azure" gradientUnits="userSpaceOnUse" x1="0" x2="0" y1="172" y2="793">
        <stop offset="0" stopColor="#0450c6" />
        <stop offset="1" stopColor="#7cc2ff" />
      </linearGradient>
    </defs>
    <Axes x={146} top={132} bottom={794} right={1260} grid={[171, 247, 328, 404, 484, 562, 640, 717]} labelX={116} labels={[809, 732, 656, 579, 498, 422, 345, 267, 189]} />
    {FLOWS.map(([x, a, b]) => (
      <g key={x}>
        <rect x={x - 8} y={a} width="16" height={793 - a} rx="8" fill="url(#lemon)" />
        <rect x={x + 18.5} y={b} width="16" height={793 - b} rx="8" fill="url(#azure)" />
      </g>
    ))}
    <PlaceholderLabels xs={[230, 368, 506, 644, 780, 917, 1055, 1193]} y={859} />
  </Chart>
);

const RINGS: { r: number; end: number; color: string; label: string; y: number }[] = [
  { r: 59.4, end: 258, color: "#2080ff", label: "93%", y: 31.3 },
  { r: 48.8, end: 208.4, color: "#ffff28", label: "82%", y: 42 },
  { r: 38.1, end: 160, color: "#ec4062", label: "65%", y: 52.7 },
  { r: 27.2, end: 134, color: "#28f8ff", label: "50%", y: 63.8 },
];

const arc = (r: number, from: number, to: number) => {
  const at = (deg: number) => {
    const a = ((deg - 90) * Math.PI) / 180;
    return `${(211.3 + r * Math.cos(a)).toFixed(2)} ${(90.9 + r * Math.sin(a)).toFixed(2)}`;
  };
  return `M${at(from)}A${r} ${r} 0 ${to - from > 180 ? 1 : 0} 1 ${at(to)}`;
};

const Legend = styled.ul`
  list-style: none;
  margin: 0;
  padding: 0 0 0 142px;
  display: grid;
  grid-template-columns: 91px 91px;
  grid-auto-rows: 21.4px;
`;

const LegendItem = styled.li<{ $color: string }>`
  display: flex;
  align-items: center;
  gap: 6px;
  font-size: 8.8px;
  font-weight: 500;
  color: #8d93a6;
  &::before {
    content: "";
    width: 7px;
    height: 7px;
    border-radius: 50%;
    background: ${(p) => p.$color};
  }
`;

const RegionChart = () => (
  <>
    <Chart height="169" viewBox="0 0 420 169" fill="none" strokeWidth="10.200">
      {RINGS.map((g) => (
        <g key={g.label}>
          <path d={arc(g.r, g.end, 270)} stroke="#4d5368" />
          <path d={arc(g.r, 0, g.end)} stroke={g.color} />
          <text x="207" y={g.y} fill="#a0a6b6" stroke="none" fontSize="7" textAnchor="end">{g.label}</text>
        </g>
      ))}
    </Chart>
    <Legend>
      <LegendItem $color="#28f8ff">服务效率</LegendItem>
      <LegendItem $color="#ffff28">审批时间</LegendItem>
      <LegendItem $color="#ec4062">成本节约</LegendItem>
      <LegendItem $color="#2080ff">项目成本</LegendItem>
    </Legend>
  </>
);

const TABS = ["游客分析", "车辆分析", "运营管理", "设备统计", "运维管理", "景区实景"];

export default function App() {
  return (
    <Page>
      <GlobalStyle />
      <WorldMap />
      <Header>
        <HeaderArt viewBox="0 0 1920 84">
          <defs>
            <linearGradient id="bar" gradientUnits="userSpaceOnUse" x1="0" x2="0" y1="0" y2="84">
              <stop offset="0" stopColor="#001f42" />
              <stop offset=".1" stopColor="#001d40" />
              <stop offset=".45" stopColor="#000c2e" />
              <stop offset=".62" stopColor="#000c2c" />
              <stop offset="1" stopColor="#001f46" />
            </linearGradient>
          </defs>
          <path d="M0 0H1920V52.500H1463L1433 84H489L458 52.500H0Z" fill="url(#bar)" />
          <Ornament />
          <g transform="translate(1920 0) scale(-1 1)">
            <Ornament />
          </g>
        </HeaderArt>
        <Clock>2021-05-10 星期一 13:30:15</Clock>
        <Title>中国恩菲索道大数据平台</Title>
        <Actions>
          <ActionButton><HomeIcon />主页</ActionButton>
          <ActionButton><ExpandIcon />全屏</ActionButton>
        </Actions>
      </Header>
      <Nav>
        {TABS.map((t, i) => (
          <NavItem key={t} $active={i === 0}>{t}</NavItem>
        ))}
      </Nav>
      <Main>
        <Column>
          <Panel title="索道型式" height={283}><TypeChart /></Panel>
          <Panel title="建成时间" height={239}><BuiltChart /></Panel>
          <Panel title="水平长度" height={278}><LengthChart /></Panel>
        </Column>
        <Column>
          <Panel title="轮播图" height={256} lines />
          <Panel title="地区分布" height={256} lines><RegionChart /></Panel>
          <Panel title="单向运量" height={289}><FlowChart /></Panel>
        </Column>
      </Main>
      <MapTooltip />
    </Page>
  );
}
